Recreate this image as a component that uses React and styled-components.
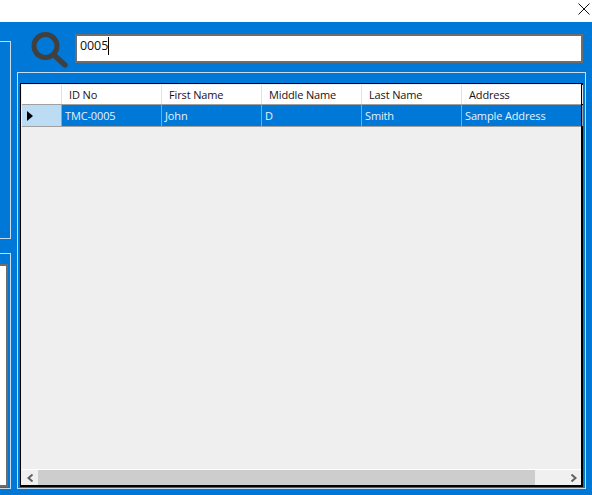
import React from 'react';
import styled, { createGlobalStyle } from 'styled-components';

const Global = createGlobalStyle`
  html, body { margin: 0; padding: 0; background: #0078d7; }
  * { box-sizing: border-box; }
`;

const Window = styled.div`
  width: 592px;
  height: 495px;
  display: flex;
  flex-direction: column;
  overflow: hidden;
  font-family: "Open Sans", "Noto Sans", sans-serif;
  font-size: 11px;
  letter-spacing: -0.14px;
  background: #0078d7;
`;

const TitleBar = styled.div`
  height: 22px;
  flex: none;
  background: #fff;
  display: flex;
  justify-content: flex-end;
  padding: 3px 2px 0 0;
`;

const CloseIcon = styled.svg`
  width: 12px;
  height: 12px;
`;

const Body = styled.div`
  flex: 1;
  display: flex;
  min-height: 0;
`;

const LeftColumn = styled.div`
  width: 11px;
  flex: none;
  display: flex;
  flex-direction: column;
  padding-top: 19px;
  padding-bottom: 6px;
`;

const SidePanel = styled.div`
  height: ${props => props.$h}px;
  flex: ${props => (props.$grow ? 1 : 'none')};
  margin-bottom: ${props => props.$gap || 0}px;
  border: 1px solid #c8dcee;
  border-left: none;
  padding: 10px 2px 1px 0;
  display: flex;
`;

const SideInner = styled.div`
  flex: 1;
  background: #fff;
  border: 2px solid #6d6d6d;
  border-left: none;
`;

const Main = styled.div`
  flex: 1;
  display: flex;
  flex-direction: column;
  padding: 12px 6px 6px 6px;
  min-width: 0;
`;

const SearchRow = styled.div`
  display: flex;
  align-items: flex-start;
  gap: 5px;
  padding-left: 13px;
  height: 38px;
  flex: none;
`;

const SearchIcon = styled.svg`
  width: 40px;
  height: 38px;
  flex: none;
  margin-top: -3px;
`;

const SearchBox = styled.div`
  flex: 1;
  height: 29px;
  margin-right: 3px;
  background: #fff;
  border: 2px solid #6d6d6d;
  padding: 0 0 6px 3px;
  display: flex;
  align-items: center;
  font-size: 12.5px;
  letter-spacing: -0.1px;
  color: #111;
`;

const Caret = styled.span`
  display: inline-block;
  width: 1px;
  height: 18px;
  background: #000;
`;

const GridPanel = styled.div`
  flex: 1;
  min-height: 0;
  border: 1px solid #c8dcee;
  padding: 10px 2px 1px 2px;
  display: flex;
`;

const Grid = styled.div`
  flex: 1;
  display: flex;
  flex-direction: column;
  min-width: 0;
  background: #efefef;
  border: 1px solid #000;
  border-width: 1px 2px 2px 1px;
`;

const HeaderRow = styled.div`
  display: flex;
  height: 20px;
  flex: none;
  margin: 1px 0 0 1px;
  background: #fff;
  border-bottom: 1px solid #a0a0a0;
`;

const HeaderCell = styled.div`
  width: ${props => props.$w}px;
  flex: none;
  border-right: 1px solid #e3e3e3;
  padding-left: 7px;
  display: flex;
  align-items: center;
  color: #1a1020;
  white-space: nowrap;
`;

const DataRow = styled.div`
  display: flex;
  height: 22px;
  flex: none;
  margin-left: 1px;
  background: #0078d7;
  border-bottom: 1px solid #a0a0a0;
`;

const RowHead = styled.div`
  width: 40px;
  flex: none;
  background: #bbdcf3;
  border-right: 1px solid #a0a0a0;
  display: flex;
  align-items: center;
  padding-left: 5px;
`;

const Arrow = styled.span`
  width: 0;
  height: 0;
  border-left: 6px solid #000;
  border-top: 5px solid transparent;
  border-bottom: 5px solid transparent;
`;

const DataCell = styled.div`
  width: ${props => props.$w}px;
  flex: none;
  border-right: 1px solid #a0a0a0;
  padding-left: 3px;
  display: flex;
  align-items: center;
  color: #e6f2fc;
  white-space: nowrap;
`;

const Empty = styled.div`
  flex: 1;
`;

const ScrollBar = styled.div`
  height: 16px;
  flex: none;
  margin-left: 1px;
  background: #f0f0f0;
  border-top: 1px solid #fff;
  display: flex;
  align-items: center;
`;

const ScrollBtn = styled.div`
  width: 16px;
  height: 100%;
  flex: none;
  display: flex;
  align-items: center;
  justify-content: center;
`;

const ArrowGlyph = styled.svg`
  width: 7px;
  height: 8px;
`;

const ScrollTrack = styled.div`
  flex: 1;
  height: 100%;
  display: flex;
`;

const ScrollThumb = styled.div`
  width: ${props => props.$w}px;
  background: #cdcdcd;
`;

const columns = [
  { name: 'ID No', value: 'TMC-0005', w: 100 },
  { name: 'First Name', value: 'John', w: 100 },
  { name: 'Middle Name', value: 'D', w: 100 },
  { name: 'Last Name', value: 'Smith', w: 100 },
  { name: 'Address', value: 'Sample Address', w: 121 },
];

export default function App() {
  return (
    <Window>
      <Global />
      <TitleBar>
        <CloseIcon viewBox="0 0 12 12">
          <path d="M0.5 0.5L11.5 11.5M11.5 0.5L0.5 11.5" stroke="#111" strokeWidth="1" fill="none" />
        </CloseIcon>
      </TitleBar>
      <Body>
        <LeftColumn>
          <SidePanel $h={198} $gap={14} />
          <SidePanel $grow>
            <SideInner />
          </SidePanel>
        </LeftColumn>
        <Main>
          <SearchRow>
            <SearchIcon viewBox="0 0 40 38">
              <circle cx="15.5" cy="15" r="11.5" fill="none" stroke="#404040" strokeWidth="5" />
              <line x1="24" y1="24" x2="35" y2="34" stroke="#404040" strokeWidth="5.5" strokeLinecap="round" />
            </SearchIcon>
            <SearchBox>
              0005<Caret />
            </SearchBox>
          </SearchRow>
          <GridPanel>
            <Grid>
              <HeaderRow>
                <HeaderCell $w={40} />
                {columns.map(c => (
                  <HeaderCell key={c.name} $w={c.w}>{c.name}</HeaderCell>
                ))}
              </HeaderRow>
              <DataRow>
                <RowHead><Arrow /></RowHead>
                {columns.map(c => (
                  <DataCell key={c.name} $w={c.w}>{c.value}</DataCell>
                ))}
              </DataRow>
              <Empty />
              <ScrollBar>
                <ScrollBtn>
                  <ArrowGlyph viewBox="0 0 7 8">
                    <path d="M5.5 0.5L1.5 4L5.5 7.5" stroke="#606060" strokeWidth="2" fill="none" />
                  </ArrowGlyph>
                </ScrollBtn>
                <ScrollTrack><ScrollThumb $w={497} /></ScrollTrack>
                <ScrollBtn>
                  <ArrowGlyph viewBox="0 0 7 8">
                    <path d="M1.5 0.5L5.5 4L1.5 7.5" stroke="#606060" strokeWidth="2" fill="none" />
                  </ArrowGlyph>
                </ScrollBtn>
              </ScrollBar>
            </Grid>
          </GridPanel>
        </Main>
      </Body>
    </Window>
  );
}
